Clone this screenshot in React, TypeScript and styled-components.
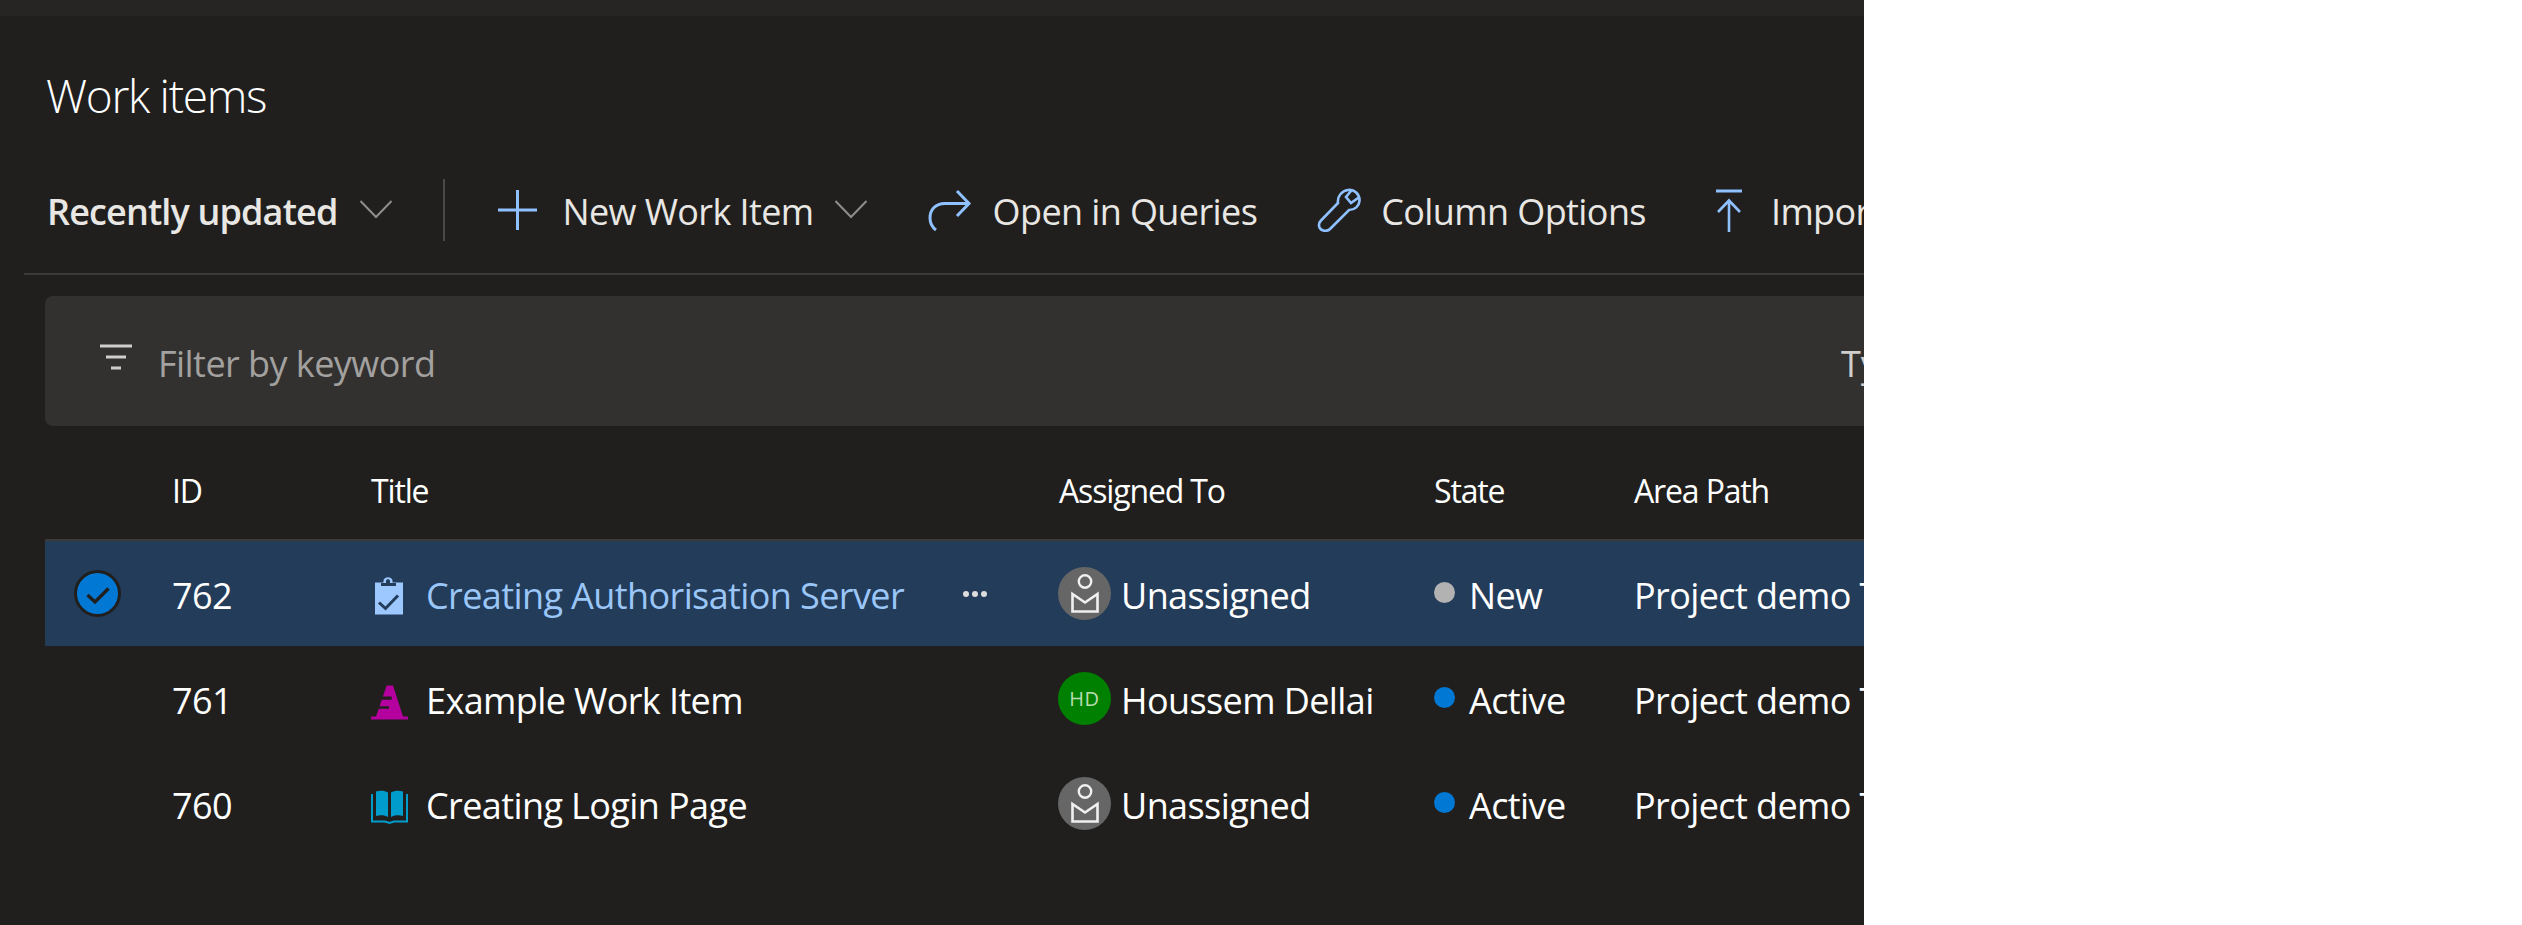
import React from "react";
import styled, { createGlobalStyle } from "styled-components";

const Global = createGlobalStyle`
  html, body { margin: 0; padding: 0; background: #ffffff; }
  body { font-family: "Open Sans", "Noto Sans", "Liberation Sans", sans-serif; }
`;

const COLUMNS = "127px 199px 688px 375px 200px 1fr";

const Page = styled.div`
  width: 1864px;
  height: 925px;
  background: #201f1e;
  overflow: hidden;
  color: #ffffff;
`;
const TopStrip = styled.div`
  height: 16px;
  background: #262524;
`;
const Heading = styled.h1`
  margin: 0;
  padding: 48px 0 0 46px;
  height: 86px;
  box-sizing: content-box;
  font-size: 46px;
  line-height: 62px;
  font-weight: 300;
  letter-spacing: -1.3px;
  color: #ffffff;
`;
const Toolbar = styled.div`
  margin: 0 0 0 24px;
  padding: 0 0 0 23px;
  height: 123px;
  display: flex;
  align-items: flex-start;
  white-space: nowrap;
  border-bottom: 2px solid #3b3a39;
  overflow: hidden;
`;
const ToolbarRow = styled.div`
  height: 62px;
  margin-top: 29px;
  display: flex;
  align-items: center;
`;
const PickerLabel = styled.span`
  font-size: 36px;
  font-weight: 600;
  letter-spacing: -0.85px;
  color: #e9e7e4;
  padding-top: 2px;
`;
const Divider = styled.div`
  width: 2px;
  height: 62px;
  background: #4a4948;
  margin: 0 52px 0 50px;
`;
const ToolButton = styled.div<{ $gap: number; $before?: number; $after: number; $iconWidth: number }>`
  display: flex;
  align-items: center;
  gap: ${(p) => p.$gap}px;
  margin-left: ${(p) => p.$before ?? 0}px;
  margin-right: ${(p) => p.$after}px;
  svg { width: ${(p) => p.$iconWidth}px; height: 44px; flex: none; }
`;
const ToolLabel = styled.span`
  font-size: 36px;
  letter-spacing: -0.6px;
  color: #e9e7e4;
  padding-top: 2px;
`;
const Chevron = styled.svg<{ $left: number }>`
  width: 34px;
  height: 20px;
  flex: none;
  margin-left: ${(p) => p.$left}px;
  margin-top: -2px;
`;
const FilterBar = styled.div`
  margin: 21px 0 0 45px;
  height: 130px;
  background: #323130;
  border-radius: 8px 0 0 8px;
  display: flex;
  align-items: center;
  padding: 0 23px 0 55px;
  white-space: nowrap;
`;
const FilterIcon = styled.svg`
  width: 32px;
  height: 26px;
  flex: none;
  margin: -8px 26px 0 0;
`;
const FilterText = styled.span`
  flex: 1;
  font-size: 36px;
  letter-spacing: -0.55px;
  color: #a3a19f;
  padding-top: 5px;
`;
const TypeLabel = styled.span`
  width: 0;
  font-size: 36px;
  color: #d0cecc;
  padding-top: 5px;
`;
const Table = styled.div`
  margin-left: 45px;
`;
const HeaderRow = styled.div`
  display: grid;
  grid-template-columns: ${COLUMNS};
  height: 113px;
  align-items: center;
  border-bottom: 2px solid #3b3a39;
  font-size: 32px;
  letter-spacing: -1.15px;
  white-space: nowrap;
`;
const HeaderCell = styled.div<{ $col?: number }>`
  grid-column: ${(p) => p.$col ?? "auto"};
  padding-top: 16px;
`;
const Row = styled.div<{ $selected?: boolean }>`
  display: grid;
  grid-template-columns: ${COLUMNS};
  height: 105px;
  align-items: center;
  background: ${(p) => (p.$selected ? "#233c5a" : "transparent")};
  font-size: 36px;
  letter-spacing: -0.6px;
  white-space: nowrap;
  overflow: hidden;
`;
const CheckCell = styled.div`
  display: flex;
  padding-left: 29px;
  margin-top: -1px;
`;
const Cell = styled.div`
  padding-top: 4px;
`;
const TitleCell = styled.div`
  display: flex;
  align-items: center;
`;
const TypeIcon = styled.svg`
  width: 37px;
  height: 44px;
  flex: none;
  margin: 0 18px 0 0;
`;
const TitleText = styled.span<{ $link?: boolean }>`
  color: ${(p) => (p.$link ? "#9bc6f8" : "#ffffff")};
  padding-top: 4px;
`;
const MoreDots = styled.svg`
  position: absolute;
  left: 961px;
  width: 28px;
  height: 8px;
`;
const AssignedCell = styled.div`
  display: flex;
  align-items: center;
  gap: 10px;
`;
const Avatar = styled.div<{ $bg: string }>`
  width: 53px;
  height: 53px;
  border-radius: 50%;
  background: ${(p) => p.$bg};
  flex: none;
  display: flex;
  align-items: center;
  justify-content: center;
  margin-top: -1px;
  margin-left: -1px;
  font-size: 20px;
  letter-spacing: 0.5px;
  color: #b9dcb0;
`;
const StateCell = styled.div`
  display: flex;
  align-items: center;
  gap: 14px;
`;
const StateDot = styled.span<{ $color: string }>`
  width: 21px;
  height: 21px;
  border-radius: 50%;
  background: ${(p) => p.$color};
  flex: none;
  margin-top: -3px;
`;

const ChevronIcon = ({ left }: { left: number }) => (
  <Chevron $left={left} viewBox="0 0 34 20">
    <path d="M1.5 2 L17 18 L32.5 2" fill="none" stroke="#8f8d8b" strokeWidth="2" />
  </Chevron>
);

const UnassignedIcon = () => (
  <svg width="28" height="40" viewBox="0 0 28 40">
    <circle cx="14" cy="8.5" r="6.2" fill="none" stroke="#f0f0f0" strokeWidth="2.4" />
    <path d="M1.5 21 L14 29.5 L26.5 21 V38.5 H1.5 Z" fill="none" stroke="#f0f0f0" strokeWidth="2.6" />
  </svg>
);

const ClipboardIcon = () => (
  <TypeIcon viewBox="0 0 37 44">
    <path fill="#9cc7ff" d="M4 10.5 H12.5 V9 C12.5 4 21.5 4 21.5 9 V10.5 H32 V42.5 H4 Z" />
    <path fill="#233c5a" d="M15 11 V9 C15 6.8 19 6.8 19 9 V11 H25 V14 H10 V11 Z" />
    <path d="M8 30.5 L14.5 36.5 L27 23.5" fill="none" stroke="#233c5a" strokeWidth="3" />
  </TypeIcon>
);
const ConeIcon = () => (
  <TypeIcon viewBox="0 0 37 44">
    <path fill="#b4009e" d="M15.7 8.5 H22 L32 39.5 H37 V42.5 H0 V39.5 H5 L7.7 31.8 H18 V29.2 H8.5 L10.8 22.8 H20.7 V19.5 H11.9 Z" />
  </TypeIcon>
);
const BookIcon = () => (
  <TypeIcon viewBox="0 0 37 44">
    <path fill="#009ccc" d="M5 9.5 C9 8 14 8.5 17 10.5 V35 C14 33 9 32.5 5 34 Z M20 10.5 C23 8.5 28 8 32 9.5 V34 C28 32.5 23 33 20 35 Z" />
    <path fill="none" stroke="#009ccc" strokeWidth="2" d="M1 12 V39.5 H14 L18.5 41 L23 39.5 H36 V12" />
  </TypeIcon>
);

const rows = [
  { id: "762", title: "Creating Authorisation Server", icon: <ClipboardIcon />, selected: true, assignee: "Unassigned", state: "New", dot: "#b2b2b2" },
  { id: "761", title: "Example Work Item", icon: <ConeIcon />, selected: false, assignee: "Houssem Dellai", state: "Active", dot: "#0078d4" },
  { id: "760", title: "Creating Login Page", icon: <BookIcon />, selected: false, assignee: "Unassigned", state: "Active", dot: "#0078d4" },
];

export default function App() {
  return (
    <Page>
      <Global />
      <TopStrip />
      <Heading>Work items</Heading>
      <Toolbar>
        <ToolbarRow>
          <PickerLabel>Recently updated</PickerLabel>
          <ChevronIcon left={22} />
          <Divider />
          <ToolButton $gap={24} $after={0} $iconWidth={41}>
            <svg viewBox="0 0 41 44">
              <path d="M20.5 2 V42 M1 22 H40" stroke="#8fc0ff" strokeWidth="3" fill="none" />
            </svg>
            <ToolLabel>New Work Item</ToolLabel>
          </ToolButton>
          <ChevronIcon left={20} />
          <ToolButton $gap={21} $before={60} $after={60} $iconWidth={44}>
            <svg viewBox="0 0 44 44">
              <path d="M29 3 L41 15.5 L29 28 M41 15.5 H17 C7 15.5 2 22 2 30 C2 35 4 39 8 42" stroke="#8fc0ff" strokeWidth="3" fill="none" />
            </svg>
            <ToolLabel>Open in Queries</ToolLabel>
          </ToolButton>
          <ToolButton $gap={20} $after={69} $iconWidth={44}>
            <svg viewBox="0 0 44 44">
              <path d="M31 2 C37 1 43 6 42.5 13 C42 18 38 22 32 22 L13 41 C10 44 4 43 2.5 39.5 C1.5 37 2 34.5 4 32.5 L21 15 C20 8 25 3 31 2 Z M34 3 L29 9 L34 15 L41 10" stroke="#8fc0ff" strokeWidth="2.6" fill="none" />
            </svg>
            <ToolLabel>Column Options</ToolLabel>
          </ToolButton>
          <ToolButton $gap={28} $after={0} $iconWidth={28}>
            <svg viewBox="0 0 28 44">
              <path d="M1 3 H27" stroke="#8fc0ff" strokeWidth="3" fill="none" />
              <path d="M14 44 V13 M3 24 L14 12.5 L25 24" stroke="#8fc0ff" strokeWidth="2.6" fill="none" />
            </svg>
            <ToolLabel>Import Work Items</ToolLabel>
          </ToolButton>
        </ToolbarRow>
      </Toolbar>
      <FilterBar>
        <FilterIcon viewBox="0 0 32 26">
          <path d="M0 2 H32 M6 13 H26 M11 24 H21" stroke="#d0cecc" strokeWidth="3" fill="none" />
        </FilterIcon>
        <FilterText>Filter by keyword</FilterText>
        <TypeLabel>Types</TypeLabel>
      </FilterBar>
      <Table>
        <HeaderRow>
          <HeaderCell $col={2}>ID</HeaderCell>
          <HeaderCell>Title</HeaderCell>
          <HeaderCell>Assigned To</HeaderCell>
          <HeaderCell>State</HeaderCell>
          <HeaderCell>Area Path</HeaderCell>
        </HeaderRow>
        {rows.map((r) => (
          <Row key={r.id} $selected={r.selected}>
            <CheckCell>
              {r.selected && (
                <svg width="47" height="47" viewBox="0 0 47 47">
                  <circle cx="23.5" cy="23.5" r="22" fill="#0078d4" stroke="#201f1e" strokeWidth="3" />
                  <path d="M13.5 25 L21 32 L34.5 18.5" fill="none" stroke="#201f1e" strokeWidth="3.4" />
                </svg>
              )}
            </CheckCell>
            <Cell>{r.id}</Cell>
            <TitleCell>
              {r.icon}
              <TitleText $link={r.selected}>{r.title}</TitleText>
              {r.selected && (
                <MoreDots viewBox="0 0 28 8">
                  <circle cx="5" cy="4" r="3" fill="#dddddd" />
                  <circle cx="14" cy="4" r="3" fill="#dddddd" />
                  <circle cx="23" cy="4" r="3" fill="#dddddd" />
                </MoreDots>
              )}
            </TitleCell>
            <AssignedCell>
              {r.assignee === "Unassigned" ? (
                <Avatar $bg="#666666">
                  <UnassignedIcon />
                </Avatar>
              ) : (
                <Avatar $bg="#008000">HD</Avatar>
              )}
              <TitleText>{r.assignee}</TitleText>
            </AssignedCell>
            <StateCell>
              <StateDot $color={r.dot} />
              <TitleText>{r.state}</TitleText>
            </StateCell>
            <Cell>Project demo Team</Cell>
          </Row>
        ))}
      </Table>
    </Page>
  );
}
